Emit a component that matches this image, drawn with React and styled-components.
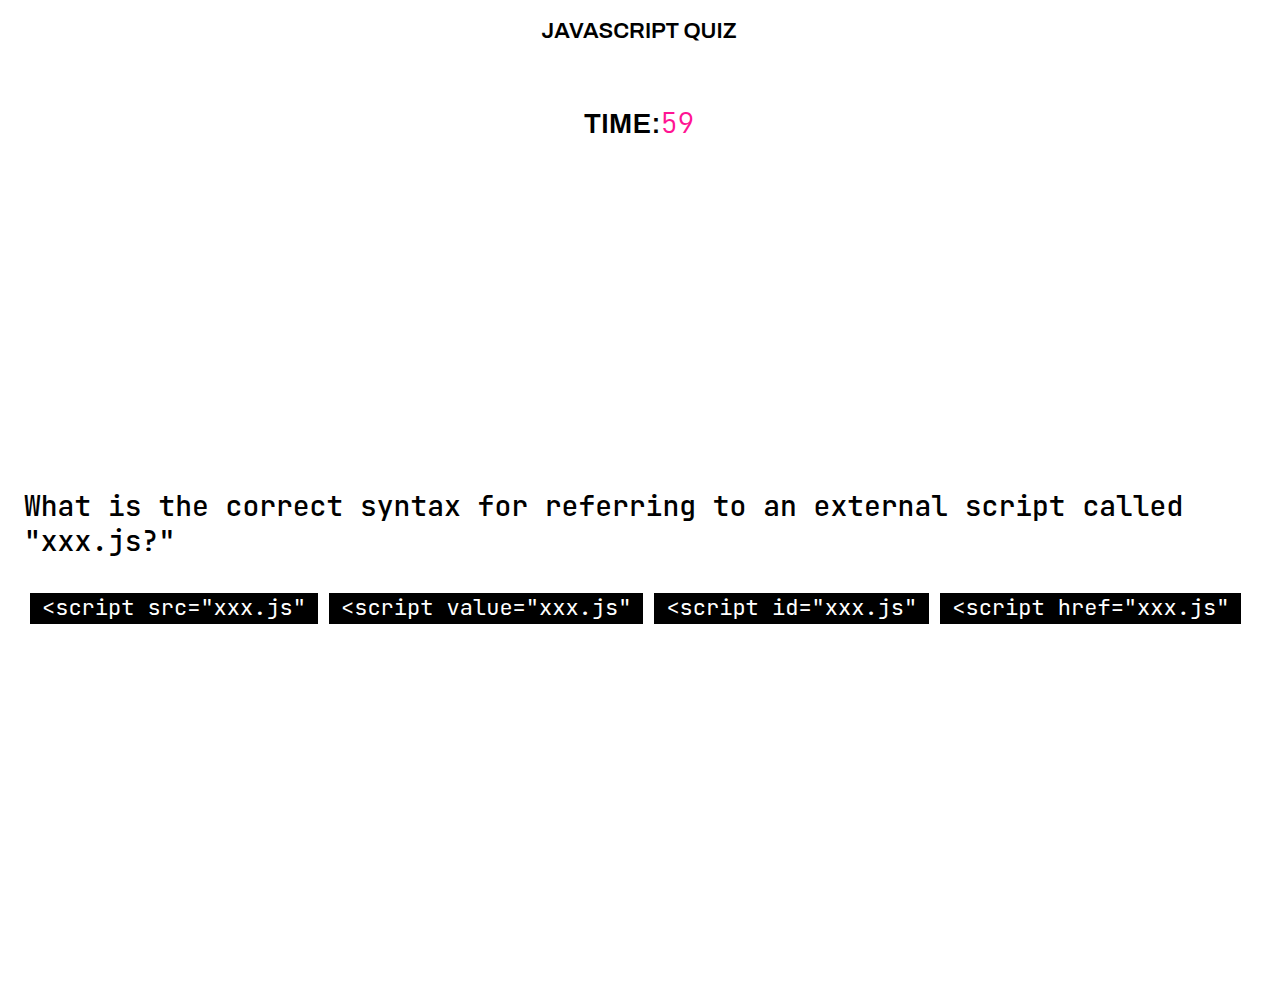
import React, { useState } from "react";
import styled, { createGlobalStyle } from "styled-components";

const GlobalStyle = createGlobalStyle`
  * {
    box-sizing: border-box;
  }
  body {
    margin: 0;
    background: #fff;
    color: #000;
    font-family: "JetBrains Mono", "DejaVu Sans Mono", monospace;
  }
`;

const Page = styled.div`
  display: flex;
  flex-direction: column;
  padding: 16px 24px;
`;

const Header = styled.header`
  display: flex;
  flex-direction: column;
  align-items: center;
  gap: 61px;
`;

const Title = styled.h1`
  margin: 0;
  font: 600 22px/30px "Archivo", "Liberation Sans", Arial, sans-serif;
`;

const Timer = styled.div`
  display: flex;
  align-items: baseline;
  font-size: 28px;
  line-height: 32px;
`;

const TimerLabel = styled.span`
  font-family: "Archivo", "Liberation Sans", Arial, sans-serif;
  font-weight: 600;
`;

const TimeLeft = styled.span`
  font-weight: 300;
  color: #ff1493;
`;

const Quiz = styled.main`
  display: flex;
  flex-direction: column;
  gap: 35px;
  margin-top: 348px;
`;

const Question = styled.h2`
  margin: 0;
  font-size: 28px;
  line-height: 35px;
  font-weight: 500;
`;

const Options = styled.div`
  display: flex;
  flex-wrap: wrap;
  gap: 11px;
  padding: 0 6px;
`;

const Option = styled.button`
  border: 0;
  padding: 0 12px 1px;
  background: #000;
  color: #fff;
  font-family: inherit;
  font-size: 22px;
  font-weight: 400;
  line-height: 30px;
  cursor: pointer;
`;

const options = [
  '<script src="xxx.js"',
  '<script value="xxx.js"',
  '<script id="xxx.js"',
  '<script href="xxx.js"',
];

export default function App() {
  const [, setAnswer] = useState(null);

  return (
    <>
      <GlobalStyle />
      <Page>
        <Header>
          <Title>JAVASCRIPT QUIZ</Title>
          <Timer>
            <TimerLabel>TIME:</TimerLabel>
            <TimeLeft>59</TimeLeft>
          </Timer>
        </Header>
        <Quiz>
          <Question>
            What is the correct syntax for referring to an external script
            called "xxx.js?"
          </Question>
          <Options>
            {options.map((text) => (
              <Option key={text} type="button" onClick={() => setAnswer(text)}>
                {text}
              </Option>
            ))}
          </Options>
        </Quiz>
      </Page>
    </>
  );
}
